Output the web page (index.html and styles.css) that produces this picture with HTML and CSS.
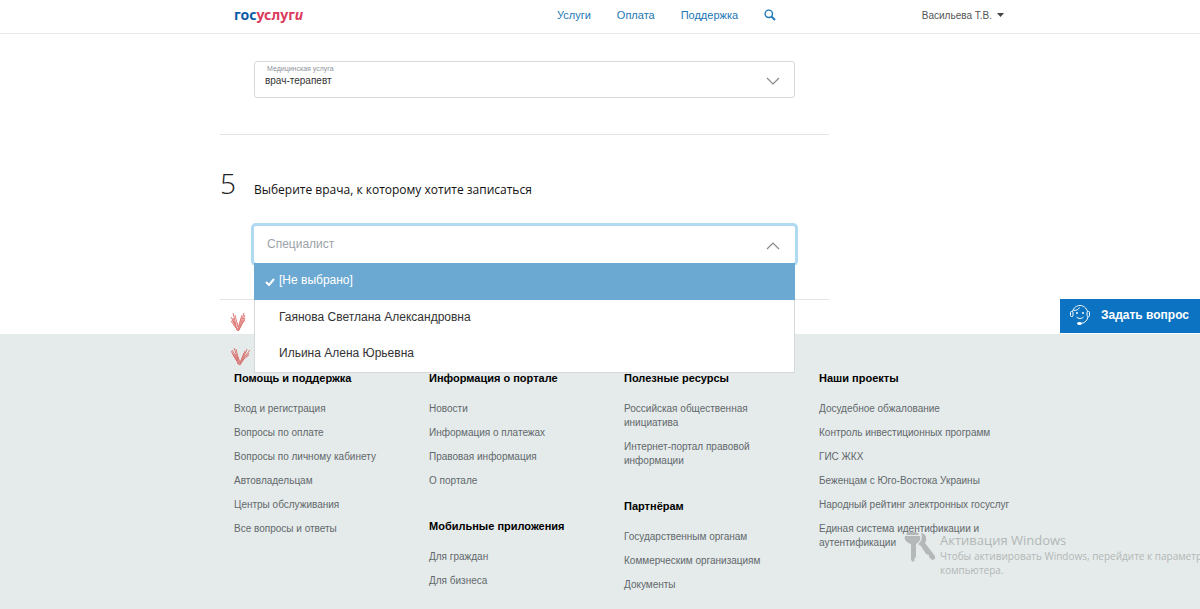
FILE: index.html
```html
<!DOCTYPE html>
<html lang="ru">
<head>
<meta charset="utf-8">
<meta name="viewport" content="width=device-width, initial-scale=1">
<title>Госуслуги — запись к врачу</title>
<link rel="stylesheet" href="styles.css">
</head>
<body>
<header class="header">
  <a class="logo" href="#"><span class="logo-blue">гос</span><span class="logo-red">услуг<em>и</em></span></a>
  <nav class="nav">
    <a href="#">Услуги</a>
    <a href="#">Оплата</a>
    <a href="#">Поддержка</a>
    <button class="search" type="button" aria-label="Поиск">
      <svg width="12" height="12" viewBox="0 0 12 12" fill="none" stroke="currentColor"><circle cx="4.8" cy="4.8" r="3.7" stroke-width="1.4"/><path d="M7.6 7.6 11 11" stroke-width="2"/></svg>
    </button>
  </nav>
  <button class="user" type="button">Васильева Т.В.
    <svg width="7" height="4" viewBox="0 0 7 4"><path d="M0 0h7L3.5 4z" fill="#444"/></svg>
  </button>
</header>

<main class="form">
  <section class="step service">
    <div class="field">
      <label for="service">Медицинская услуга</label>
      <select id="service"><option>врач-терапевт</option></select>
      <svg class="chevron" width="14" height="8" viewBox="0 0 14 8"><path d="M1 1l6 6 6-6"/></svg>
    </div>
  </section>
  <section class="step doctor">
    <div class="step-head">
      <span class="step-number">5</span>
      <h2 id="doctor-title">Выберите врача, к которому хотите записаться</h2>
    </div>
    <div class="combo">
      <button class="combo-toggle" type="button" aria-haspopup="listbox" aria-expanded="true" aria-labelledby="doctor-title">Специалист
        <svg class="chevron" width="14" height="8" viewBox="0 0 14 8"><path d="M1 7l6-6 6 6"/></svg>
      </button>
      <ul class="options" role="listbox" aria-labelledby="doctor-title">
        <li class="option selected" role="option" aria-selected="true">
          <svg class="tick" width="10" height="8" viewBox="0 0 10 8"><path d="M1 4l3 3 5-6" fill="none" stroke="#fff" stroke-width="2"/></svg>[Не выбрано]</li>
        <li class="option" role="option" aria-selected="false">Гаянова Светлана Александровна</li>
        <li class="option" role="option" aria-selected="false">Ильина Алена Юрьевна</li>
      </ul>
      <svg class="mark mark-first" width="18" height="20" viewBox="0 0 18 20"><path d="M1 5l5 9M3 1l3 12M5 3l3 12M2 8l4 7M1 9l5 7M3 6l4 11M7 11l2 6M8 17l3-11M8 18l4-15M9 18l5-17M10 15l5-12M9 18l6-12M10 14l5-6M4 10l3 8M6 17l2 2 3-5M5 13l4 6"/></svg>
      <svg class="mark mark-second" width="20" height="20" viewBox="0 0 20 20"><path d="M1 4l6 10M3 2l4 11M5 3l3 12M1 7l6 8M0 5l7 11M2 9l5 8M7 11l2 6M9 17l4-10M9 18l5-13M10 17l6-14M10 15l9-11M9 18l9-11M11 14l7-5M4 8l4 10M6 17l3 2 3-5M5 13l4 6"/></svg>
    </div>
  </section>
</main>

<button class="ask" type="button">
  <svg width="22" height="22" viewBox="0 0 22 22" fill="none" stroke="#fff" stroke-width="1"><path d="M3.500 7.500C4.500 4 7.500 1.500 11 1.500s6.500 2.500 7.500 6M19 13c-1 4-3.500 6-7 6.500"/><rect x="1.500" y="7.500" width="2.500" height="5" rx="1"/><rect x="18" y="7.500" width="2.500" height="5" rx="1"/><path d="M4.500 6.500c3 0 5-1 6-3M7.500 13c2 2 5 2 7 0"/><rect x="8.500" y="18.500" width="4" height="2" rx="1" fill="#fff"/><circle cx="8" cy="9" r=".6" fill="#fff"/><circle cx="14" cy="9" r=".6" fill="#fff"/></svg>
  Задать вопрос
</button>

<footer class="footer">
  <div class="column">
    <section><h3>Помощь и поддержка</h3>
      <ul><li><a href="#">Вход и регистрация</a></li><li><a href="#">Вопросы по оплате</a></li><li><a href="#">Вопросы по личному кабинету</a></li><li><a href="#">Автовладельцам</a></li><li><a href="#">Центры обслуживания</a></li><li><a href="#">Все вопросы и ответы</a></li></ul>
    </section>
  </div>
  <div class="column">
    <section><h3>Информация о портале</h3>
      <ul><li><a href="#">Новости</a></li><li><a href="#">Информация о платежах</a></li><li><a href="#">Правовая информация</a></li><li><a href="#">О портале</a></li></ul>
    </section>
    <section><h3>Мобильные приложения</h3>
      <ul><li><a href="#">Для граждан</a></li><li><a href="#">Для бизнеса</a></li></ul>
    </section>
  </div>
  <div class="column">
    <section><h3>Полезные ресурсы</h3>
      <ul><li><a href="#">Российская общественная инициатива</a></li><li><a href="#">Интернет-портал правовой информации</a></li></ul>
    </section>
    <section><h3>Партнёрам</h3>
      <ul><li><a href="#">Государственным органам</a></li><li><a href="#">Коммерческим организациям</a></li><li><a href="#">Документы</a></li></ul>
    </section>
  </div>
  <div class="column">
    <section><h3>Наши проекты</h3>
      <ul><li><a href="#">Досудебное обжалование</a></li><li><a href="#">Контроль инвестиционных программ</a></li><li><a href="#">ГИС ЖКХ</a></li><li><a href="#">Беженцам с Юго-Востока Украины</a></li><li><a href="#">Народный рейтинг электронных госуслуг</a></li><li><a href="#">Единая система идентификации и аутентификации</a></li></ul>
    </section>
  </div>
</footer>

<aside class="activation">
  <svg width="32" height="32" viewBox="0 0 32 32"><path fill="#b5b8b8" d="M1 5h15c1 4-1 6-4 8v13l-2 2 1 1-2 2-2-2V13C2 11 0 9 1 5zM2 3c3-3 10-3 13 0l-1 1H3zM17 2c4 0 6 4 5 8l-1 2 10 13v3l-3 1-3-3v-2l-3-1-5-8-3-2c3-2 5-6 3-11z"/></svg>
  <div class="activation-text">
    <strong>Активация Windows</strong>
    <p>Чтобы активировать Windows, перейдите к параметрам<br>компьютера.</p>
  </div>
</aside>
</body>
</html>
```
FILE: styles.css
```css
* {
  box-sizing: border-box;
}

body {
  position: relative;
  display: flex;
  flex-direction: column;
  min-height: 100vh;
  margin: 0;
  overflow-x: hidden;
  background: #fff;
  color: #333;
  font-family: "Liberation Sans", Arial, sans-serif;
  font-size: 11px;
}

a {
  color: inherit;
  text-decoration: none;
}

button {
  padding: 0;
  border: 0;
  background: none;
  color: inherit;
  font: inherit;
  cursor: pointer;
}

ul {
  margin: 0;
  padding: 0;
  list-style: none;
}

.header {
  display: grid;
  grid-template-columns: 323px 1fr auto;
  align-items: center;
  height: 34px;
  padding: 0 196px 3px 234px;
  border-bottom: 1px solid #e8ebee;
}

.logo {
  font-family: "Noto Sans", sans-serif;
  font-size: 14px;
  font-weight: 700;
  line-height: 20px;
}

.logo-blue {
  color: #0d5ca5;
}

.logo-red {
  color: #dc3a5c;
}

.nav {
  display: flex;
  align-items: center;
  gap: 26px;
  color: #1d77b5;
}

.search {
  display: flex;
  color: #1d77b5;
}

.user {
  display: flex;
  align-items: center;
  gap: 5px;
  color: #555;
  font-size: 10px;
}

.form {
  width: 609px;
  max-width: 100%;
  margin-bottom: 34px;
  margin-left: 220px;
}

.step {
  padding: 0 34px;
  border-bottom: 1px solid #e2e4e6;
}

.service {
  padding-top: 27px;
  padding-bottom: 36px;
}

.field {
  position: relative;
}

.field label {
  position: absolute;
  top: 4px;
  left: 13px;
  color: #8d9299;
  font-size: 7px;
  line-height: 8px;
}

.field select {
  display: block;
  width: 100%;
  height: 37px;
  padding: 2px 10px 0;
  border: 1px solid #d6d9dc;
  border-radius: 3px;
  appearance: none;
  background: #fff;
  color: #333;
  font: inherit;
  font-size: 10px;
}

.chevron {
  position: absolute;
  top: 50%;
  right: 15px;
  margin-top: -3px;
  fill: none;
  stroke: #888;
  stroke-width: 1.2;
}

.doctor {
  padding-top: 31px;
  padding-bottom: 36px;
}

.step-head {
  display: flex;
  align-items: baseline;
  margin-left: -34px;
}

.step-number {
  flex: 0 0 34px;
  color: #222;
  font-family: "Open Sans", sans-serif;
  font-size: 28px;
  font-weight: 300;
  line-height: 34px;
}

h2 {
  margin: 0;
  color: #111;
  font-family: "Open Sans", sans-serif;
  font-size: 12px;
  font-weight: 400;
}

.combo {
  position: relative;
  margin-top: 26px;
}

.combo-toggle {
  position: relative;
  display: block;
  width: 100%;
  height: 37px;
  padding: 0 13px 2px;
  border-radius: 2px;
  background: #fff;
  box-shadow: 0 0 0 3px #b0d9f2;
  color: #9da2a8;
  font-size: 12px;
  text-align: left;
}

.options {
  position: absolute;
  top: 37px;
  left: 0;
  z-index: 2;
  width: 100%;
  border: 1px solid #d5d9da;
  border-top: 0;
  background: #fff;
  font-size: 12px;
}

.option {
  position: relative;
  height: 36px;
  padding-left: 24px;
  line-height: 35px;
}

.selected {
  height: 37px;
  margin: 0 -1px;
  padding-left: 25px;
  background: #6ba9d2;
  color: #fff;
}

.tick {
  position: absolute;
  top: 15px;
  left: 11px;
}

.mark {
  position: absolute;
  z-index: 1;
  fill: none;
  stroke: #d65350;
  stroke-width: 1;
  opacity: .75;
}

.mark-first {
  top: 86px;
  left: -24px;
}

.mark-second {
  top: 120px;
  left: -23px;
}

.ask {
  position: absolute;
  top: 299px;
  right: 0;
  display: flex;
  align-items: center;
  gap: 10px;
  height: 34px;
  padding: 0 11px 2px 9px;
  background: #0b73c2;
  color: #fff;
  font-size: 12px;
  font-weight: 700;
}

.footer {
  display: grid;
  flex: 1;
  grid-template-columns: repeat(4, 195px);
  padding: 37px 0 16px 234px;
  background: #e5ebea;
  color: #62686c;
  font-size: 10px;
  line-height: 14px;
}

.column {
  display: flex;
  flex-direction: column;
  gap: 31px;
}

h3 {
  margin: 0 0 17px;
  color: #000;
  font-size: 11px;
  line-height: 14px;
}

.column li {
  margin-bottom: 10px;
}

.column li:last-child {
  margin-bottom: 0;
}

.column:nth-child(3) li {
  max-width: 150px;
}

.activation {
  position: absolute;
  top: 531px;
  right: 0;
  display: flex;
  gap: 4px;
  width: 296px;
  overflow: hidden;
  color: #b3b7b7;
  font-family: "Open Sans", sans-serif;
  white-space: nowrap;
}

.activation svg {
  flex: none;
}

.activation strong {
  display: block;
  font-size: 13px;
  font-weight: 400;
  line-height: 18px;
}

.activation p {
  margin: 0;
  font-size: 10px;
  line-height: 14px;
}
```
